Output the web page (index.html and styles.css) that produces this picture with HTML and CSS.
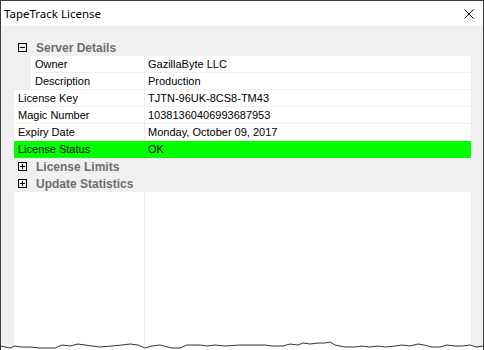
FILE: index.html
```html
<!DOCTYPE html>
<html lang="en">
<head>
    <meta charset="UTF-8">
    <title>TapeTrack License</title>
    <link rel="stylesheet" href="styles.css">
</head>
<body>

    <div class="window">
        <div class="titlebar">
            <span class="title">TapeTrack License</span>
            <svg class="close" width="10" height="10" viewBox="0 0 10 10">
                <path d="M0.5 0.5 L9.5 9.5 M9.5 0.5 L0.5 9.5" stroke="#000" stroke-width="1" fill="none"/>
            </svg>
        </div>

        <div class="content">
            <div class="grid">
                <div class="group">
                    <svg class="toggle" width="9" height="9" viewBox="0 0 9 9">
                        <rect x="0.5" y="0.5" width="8" height="8" fill="none" stroke="#000"/>
                        <path d="M2 4.5 H7" stroke="#000"/>
                    </svg>
                    <span>Server Details</span>
                </div>
                <div class="row sub">
                    <div class="name">Owner</div>
                    <div class="value">GazillaByte LLC</div>
                </div>
                <div class="row sub">
                    <div class="name">Description</div>
                    <div class="value">Production</div>
                </div>
                <div class="row">
                    <div class="name">License Key</div>
                    <div class="value">TJTN-96UK-8CS8-TM43</div>
                </div>
                <div class="row">
                    <div class="name">Magic Number</div>
                    <div class="value">10381360406993687953</div>
                </div>
                <div class="row">
                    <div class="name">Expiry Date</div>
                    <div class="value">Monday, October 09, 2017</div>
                </div>
                <div class="row status-ok">
                    <div class="name">License Status</div>
                    <div class="value">OK</div>
                </div>
                <div class="group">
                    <svg class="toggle" width="9" height="9" viewBox="0 0 9 9">
                        <rect x="0.5" y="0.5" width="8" height="8" fill="none" stroke="#000"/>
                        <path d="M2 4.5 H7 M4.5 2 V7" stroke="#000"/>
                    </svg>
                    <span>License Limits</span>
                </div>
                <div class="group">
                    <svg class="toggle" width="9" height="9" viewBox="0 0 9 9">
                        <rect x="0.5" y="0.5" width="8" height="8" fill="none" stroke="#000"/>
                        <path d="M2 4.5 H7 M4.5 2 V7" stroke="#000"/>
                    </svg>
                    <span>Update Statistics</span>
                </div>
                <div class="empty">
                    <div class="name"></div>
                    <div class="value"></div>
                </div>
            </div>
        </div>

        <svg class="torn" width="484" height="12" viewBox="0 338 484 12">
            <polygon fill="#fff" points="0,346 5,347 10,348 15,346 20,347 30,347 40,348 55,348 62,345 70,346 78,344 85,345 92,346 100,347 112,346 122,345 130,344 138,345 145,348 152,346 160,345 172,348 180,348 187,345 200,345 207,346 215,345 225,346 240,345 255,345 265,345 272,346 283,346 290,344 298,345 303,343 310,344 318,343 325,343 330,342 335,345 345,347 355,347 362,346 370,347 378,346 385,347 395,346 402,345 410,346 418,344 424,345 432,347 440,347 447,345 455,346 462,346 470,345 476,347 484,346 484,350 0,350"/>
            <polyline fill="none" stroke="#333" stroke-width="1" points="0,346 5,347 10,348 15,346 20,347 30,347 40,348 55,348 62,345 70,346 78,344 85,345 92,346 100,347 112,346 122,345 130,344 138,345 145,348 152,346 160,345 172,348 180,348 187,345 200,345 207,346 215,345 225,346 240,345 255,345 265,345 272,346 283,346 290,344 298,345 303,343 310,344 318,343 325,343 330,342 335,345 345,347 355,347 362,346 370,347 378,346 385,347 395,346 402,345 410,346 418,344 424,345 432,347 440,347 447,345 455,346 462,346 470,345 476,347 484,346"/>
        </svg>
    </div>

</body>
</html>
```

FILE: styles.css
```css
body {
    margin: 0;
    padding: 0;
    background-color: #fff;
    font-family: "Liberation Sans", Arial, sans-serif;
    font-size: 11px;
    color: #000;
}

.window {
    position: relative;
    width: 484px;
    height: 350px;
    box-sizing: border-box;
    border: 1px solid #3c3c3c;
    border-bottom: none;
    display: flex;
    flex-direction: column;
    overflow: hidden;
}

.titlebar {
    height: 25px;
    display: flex;
    align-items: center;
    justify-content: space-between;
    padding: 0 9px 0 3px;
    background-color: #fff;
}

.title {
    font-family: "Noto Sans", sans-serif;
    font-size: 11.5px;
    margin-top: -1px;
}

.close {
    display: block;
    margin-top: 1px;
}

.content {
    flex: 1;
    display: flex;
    background-color: #f0f0f0;
    padding: 13px 12px 0 13px;
}

.grid {
    flex: 1;
    display: flex;
    flex-direction: column;
}

.group {
    height: 17px;
    display: flex;
    align-items: center;
    font-weight: bold;
    font-size: 12px;
    color: #6e6e6e;
}

.toggle {
    display: block;
    margin: 0 9px 0 4px;
}

.row {
    display: grid;
    grid-template-columns: 131px 1fr;
    height: 16px;
    line-height: 16px;
    border-bottom: 1px solid #f0f0f0;
    background-color: #fff;
    white-space: nowrap;
}

.name {
    padding-left: 4px;
    border-right: 1px solid #f0f0f0;
}

.value {
    padding-left: 3px;
}

.row.sub .name {
    border-left: 17px solid #f0f0f0;
}

.status-ok {
    background-color: #00ff00;
    border-bottom-color: #00ff00;
}

.status-ok .name {
    border-right-color: #00ff00;
}

.empty {
    flex: 1;
    display: grid;
    grid-template-columns: 131px 1fr;
    background-color: #fff;
}

.torn {
    position: absolute;
    left: -1px;
    bottom: 0;
    display: block;
}
```
